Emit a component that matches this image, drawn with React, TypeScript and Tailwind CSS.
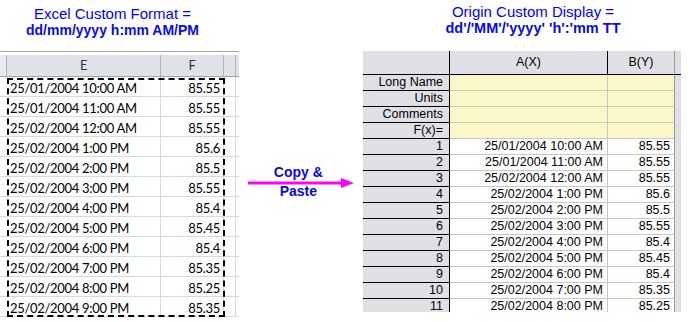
const rows: [string, string][] = [
  ['25/01/2004 10:00 AM', '85.55'],
  ['25/01/2004 11:00 AM', '85.55'],
  ['25/02/2004 12:00 AM', '85.55'],
  ['25/02/2004 1:00 PM', '85.6'],
  ['25/02/2004 2:00 PM', '85.5'],
  ['25/02/2004 3:00 PM', '85.55'],
  ['25/02/2004 4:00 PM', '85.4'],
  ['25/02/2004 5:00 PM', '85.45'],
  ['25/02/2004 6:00 PM', '85.4'],
  ['25/02/2004 7:00 PM', '85.35'],
  ['25/02/2004 8:00 PM', '85.25'],
  ['25/02/2004 9:00 PM', '85.35'],
];

const metaLabels = ['Long Name', 'Units', 'Comments', 'F(x)='];

function ExcelSheet() {
  return (
    <div className="relative font-['Lato',sans-serif] text-[13px] tracking-[-0.3px] text-black">
      <div className="h-px bg-[#a8a8a8]" />
      <div className="h-[3px]" />
      {/* column header */}
      <div className="flex h-[22px] bg-[#dfe3e8] border-b border-[#9ea4ab] text-[#333]">
        <div className="w-[7px] border-r border-[#b0b5bb] bg-[#e6e9ed]" />
        <div className="w-[154px] border-r border-[#b0b5bb] flex items-center justify-center">E</div>
        <div className="w-[63px] border-r border-[#b0b5bb] flex items-center justify-center">F</div>
        <div className="w-[12px] border-r border-[#b0b5bb]" />
      </div>
      {rows.map(([d, v], i) => (
        <div key={i} className="flex h-[20px] border-b border-[#d9d9d9] leading-[20px]">
          <div className="w-[7px]" />
          <div className="w-[154px] border-r border-[#d9d9d9] pl-[3px] pt-[1px] whitespace-nowrap">{d}</div>
          <div className="w-[63px] border-r border-[#d9d9d9] pr-[3px] pt-[1px] text-right">{v}</div>
          <div className="w-[12px] border-r border-[#d9d9d9]" />
        </div>
      ))}
      {/* copy selection marquee */}
      <div className="absolute left-[7px] top-[27px] w-[218px] h-[239px] border-2 border-dashed border-black pointer-events-none" />
    </div>
  );
}

function OriginSheet() {
  return (
    <div className="w-[318px] h-[261px] overflow-hidden bg-[#e0e0e4] font-['Liberation_Sans',Arial,sans-serif] text-[12.5px] text-black">
      <div className="flex h-[24px] border-b border-black">
        <div className="w-[87px] border-r border-black" />
        <div className="w-[158px] border-r border-black flex items-center justify-center">A(X)</div>
        <div className="w-[67px] border-r border-[#9a9a9a] flex items-center justify-center">B(Y)</div>
        <div className="flex-1" />
      </div>
      {metaLabels.map((m) => (
        <div key={m} className="flex h-[16px] leading-[15px]">
          <div className="w-[87px] border-r border-b border-r-black border-b-black text-right pr-[6px]">{m}</div>
          <div className="w-[158px] bg-[#faf8c6] border-r border-b border-[#c8c8c8]" />
          <div className="w-[67px] bg-[#faf8c6] border-r border-b border-r-[#9a9a9a] border-b-[#c8c8c8]" />
          <div className="flex-1" />
        </div>
      ))}
      {rows.slice(0, 11).map(([d, v], i) => (
        <div key={i} className="flex h-[16px] leading-[15px]">
          <div className="w-[87px] border-r border-b border-r-black border-b-black text-right pr-[6px]">{i + 1}</div>
          <div className="w-[158px] bg-white border-r border-b border-[#c8c8c8] text-right pr-[4px] whitespace-nowrap">{d}</div>
          <div className="w-[67px] bg-white border-r border-b border-r-[#9a9a9a] border-b-[#c8c8c8] text-right pr-[4px]">{v}</div>
          <div className="flex-1" />
        </div>
      ))}
    </div>
  );
}

export default function App() {
  return (
    <div className="w-[692px] h-[322px] bg-white flex overflow-hidden font-['Liberation_Sans',Arial,sans-serif]">
      {/* Excel side */}
      <div className="w-[240px] flex flex-col">
        <div className="w-[225px] h-[51px] pt-[5px] text-center">
          <div className="text-[15px] leading-[17px] text-[#0000ff]">Excel Custom Format =</div>
          <div className="text-[14px] leading-[17px] font-bold text-[#0a0ae6]">dd/mm/yyyy h:mm AM/PM</div>
        </div>
        <ExcelSheet />
      </div>

      {/* copy & paste arrow */}
      <div className="w-[125px] relative">
        <svg className="absolute left-[9px] top-[177px]" width="108" height="12" viewBox="0 0 108 12">
          <line x1="0" y1="6" x2="96" y2="6" stroke="#ff00ff" strokeWidth="3" />
          <polygon points="93,1 106,6 93,11" fill="#ff00ff" />
        </svg>
        <div className="relative mt-[163px] pr-[5px] text-center text-[14px] leading-[19px] font-bold text-[#0a0ae6]">
          <div>Copy &amp;</div>
          <div>Paste</div>
        </div>
      </div>

      {/* Origin side */}
      <div className="flex-1 flex flex-col">
        <div className="w-[318px] ml-[11px] h-[51px] pt-[4px] text-center">
          <div className="text-[15px] leading-[16px] text-[#0000ff]">Origin Custom Display =</div>
          <div className="text-[14.5px] leading-[17px] font-bold text-[#0a0ae6]">dd'/'MM'/'yyyy' 'h':'mm TT</div>
        </div>
        <OriginSheet />
      </div>
    </div>
  );
}
